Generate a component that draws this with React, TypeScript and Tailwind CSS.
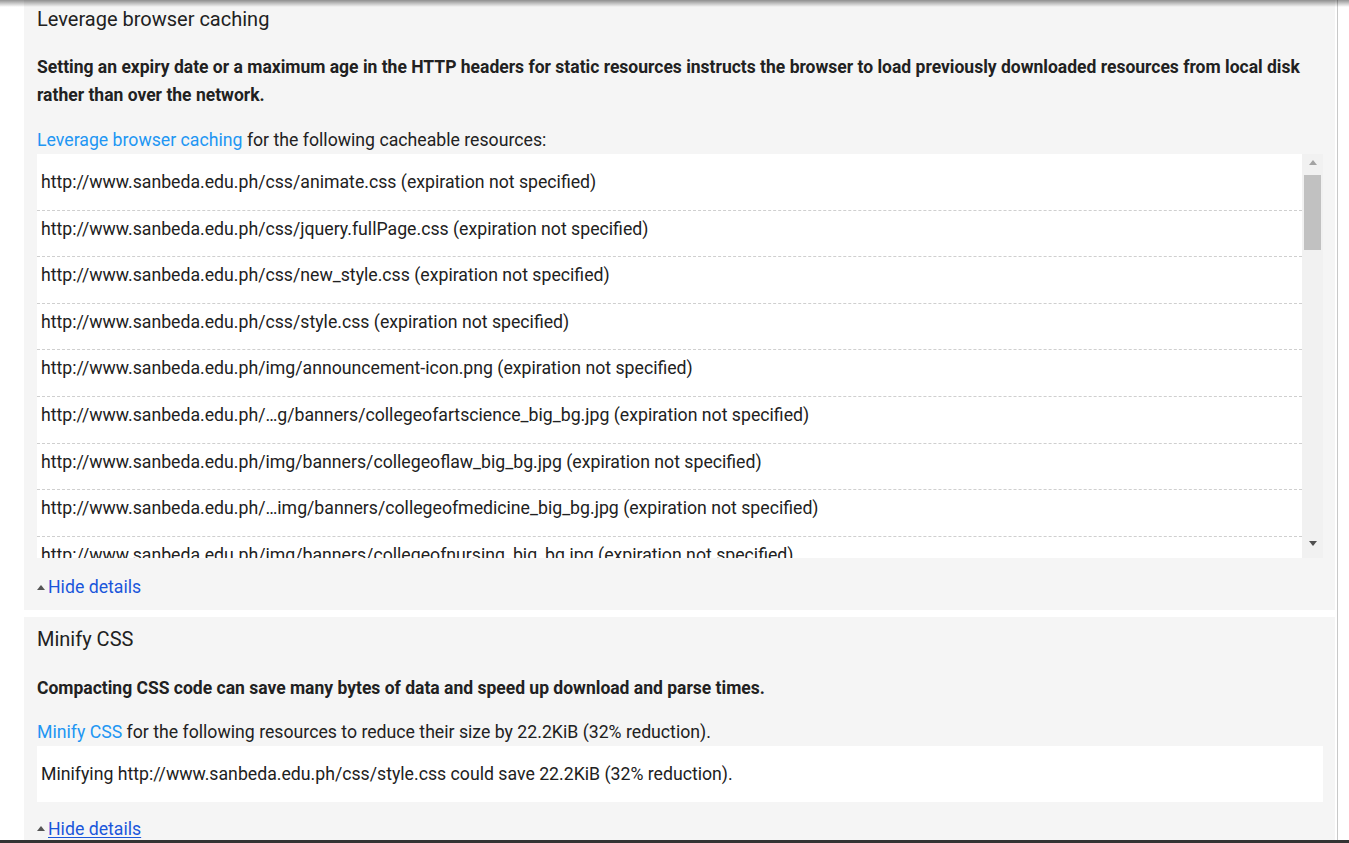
import * as React from "react";

// ─── Data ─────────────────────────────────────────────────────────────────────

const CACHE_URLS = [
  "http://www.sanbeda.edu.ph/css/animate.css",
  "http://www.sanbeda.edu.ph/css/jquery.fullPage.css",
  "http://www.sanbeda.edu.ph/css/new_style.css",
  "http://www.sanbeda.edu.ph/css/style.css",
  "http://www.sanbeda.edu.ph/img/announcement-icon.png",
  "http://www.sanbeda.edu.ph/…g/banners/collegeofartscience_big_bg.jpg",
  "http://www.sanbeda.edu.ph/img/banners/collegeoflaw_big_bg.jpg",
  "http://www.sanbeda.edu.ph/…img/banners/collegeofmedicine_big_bg.jpg",
  "http://www.sanbeda.edu.ph/img/banners/collegeofnursing_big_bg.jpg",
  "http://www.sanbeda.edu.ph/img/banners/collegeofnursing_sm_bg.jpg",
];

// ─── Small pieces ─────────────────────────────────────────────────────────────

const Triangle = ({ up = true, color = "#555" }: { up?: boolean; color?: string }) => (
  <svg width="8" height="5" viewBox="0 0 8 5" className="shrink-0">
    <polygon points={up ? "0,5 8,5 4,0" : "0,0 8,0 4,5"} fill={color} />
  </svg>
);

const HideDetails = ({ underline = false }: { underline?: boolean }) => (
  <div className="flex items-center gap-[3px] leading-[28px]">
    <Triangle />
    <span className={underline ? "text-[#1a56db] underline underline-offset-2" : "text-[#1a56db]"}>
      Hide details
    </span>
  </div>
);

const Row = ({ children, last = false }: { children: React.ReactNode; last?: boolean }) => (
  <div
    className={
      last
        ? "pl-[4px] pt-[7px] pb-[16px] leading-[22.6px] whitespace-nowrap"
        : "pl-[4px] pt-[7px] pb-[16px] leading-[22.6px] whitespace-nowrap border-b border-dashed border-[#cfcfcf]"
    }
  >
    {children}
  </div>
);

const FakeScrollbar = () => (
  <div className="flex w-[21px] shrink-0 flex-col bg-[#f1f1f1]">
    <div className="flex h-[21px] items-center justify-center pb-[4px]">
      <Triangle color="#a3a3a3" />
    </div>
    <div className="ml-[2px] mr-[2px] h-[75px] bg-[#c1c1c1]" />
    <div className="flex-1" />
    <div className="flex h-[21px] items-center justify-center pb-[8px]">
      <Triangle up={false} color="#505050" />
    </div>
  </div>
);

// ─── Page ─────────────────────────────────────────────────────────────────────

export default function App() {
  return (
    <div className="relative min-h-screen overflow-hidden bg-white font-['Roboto','Liberation_Sans',sans-serif] text-[17.7px] text-[#212121]">
      {/* header shadow */}
      <div className="pointer-events-none absolute inset-x-0 top-0 z-10 h-[7px] bg-[linear-gradient(to_bottom,rgba(0,0,0,0.42),rgba(0,0,0,0))]" />

      <div className="w-[1338px] border-r border-[#c8c8c8] pl-6 pr-[2px]">
        {/* ── Leverage browser caching ── */}
        <section className="bg-[#f5f5f5] pl-[13px] pr-[12px] pt-[5px] pb-[9px]">
          <h3 className="text-[20px] leading-[28px]">Leverage browser caching</h3>
          <p className="mt-[20px] text-[17.5px] font-bold leading-[28px]">
            Setting an expiry date or a maximum age in the HTTP headers for static resources instructs the
            browser to load previously downloaded resources from local disk rather than over the network.
          </p>
          <p className="mt-[17px] leading-[28px]">
            <span className="text-[#2196f3]">Leverage browser caching</span> for the following cacheable
            resources:
          </p>
          <div className="flex h-[404px] bg-white">
            <div className="min-w-0 flex-1 overflow-hidden pt-[10px]">
              {CACHE_URLS.map((url) => (
                <Row key={url}>{url} (expiration not specified)</Row>
              ))}
            </div>
            <FakeScrollbar />
          </div>
          <div className="mt-[15px]">
            <HideDetails />
          </div>
        </section>

        {/* ── Minify CSS ── */}
        <section className="mt-[7px] bg-[#f5f5f5] pl-[13px] pr-[12px] pt-[8px] pb-[10px]">
          <h3 className="text-[20px] leading-[28px]">Minify CSS</h3>
          <p className="mt-[21px] text-[17.5px] font-bold leading-[28px]">
            Compacting CSS code can save many bytes of data and speed up download and parse times.
          </p>
          <p className="mt-[16px] leading-[28px]">
            <span className="text-[#2196f3]">Minify CSS</span> for the following resources to reduce their size
            by 22.2KiB (32% reduction).
          </p>
          <div className="bg-white pt-[10px]">
            <Row last>
              Minifying http://www.sanbeda.edu.ph/css/style.css could save 22.2KiB (32% reduction).
            </Row>
          </div>
          <div className="mt-[13px]">
            <HideDetails underline />
          </div>
        </section>
      </div>

      {/* bottom bar */}
      <div className="fixed inset-x-0 bottom-0 z-10 h-[3px] bg-[#333]" />
    </div>
  );
}
